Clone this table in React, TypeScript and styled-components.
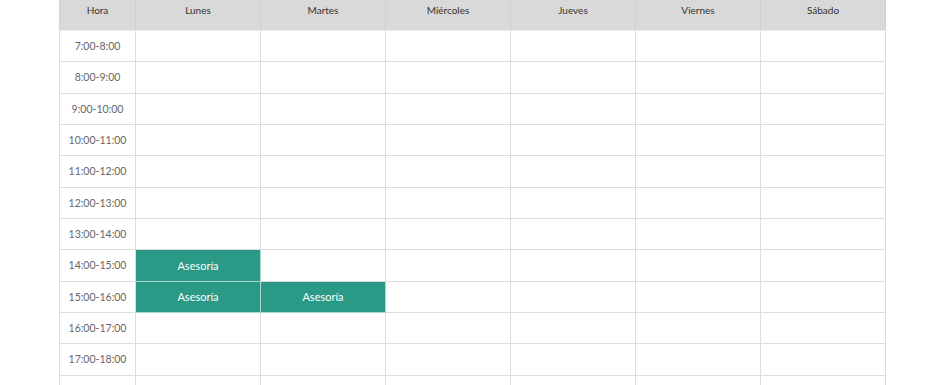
import React from 'react'
import styled, { createGlobalStyle } from 'styled-components'

const GlobalStyle = createGlobalStyle`
	html, body {
		margin: 0;
		padding: 0;
		background: #ffffff;
		overflow: hidden;
	}
	body {
		font-family: Lato, "Open Sans", "Liberation Sans", sans-serif;
	}
`

const days = ['Lunes', 'Martes', 'Miércoles', 'Jueves', 'Viernes', 'Sábado']

const hours = [
	'7:00-8:00',
	'8:00-9:00',
	'9:00-10:00',
	'10:00-11:00',
	'11:00-12:00',
	'12:00-13:00',
	'13:00-14:00',
	'14:00-15:00',
	'15:00-16:00',
	'16:00-17:00',
	'17:00-18:00',
	'',
]

// hour index -> day index -> label
const booked: Record<number, Record<number, string>> = {
	7: { 0: 'Asesoría' },
	8: { 0: 'Asesoría', 1: 'Asesoría' },
}

const App: React.FC = () => {
	return (
		<>
			<GlobalStyle />
			<StyledPage>
				<StyledGrid>
					<StyledHeadCell first>Hora</StyledHeadCell>
					{days.map((d) => (
						<StyledHeadCell key={d}>{d}</StyledHeadCell>
					))}
					{hours.map((h, i) => (
						<React.Fragment key={i}>
							<StyledHourCell>{h}</StyledHourCell>
							{days.map((d, j) => {
								const label = booked[i] && booked[i][j]
								return (
									<StyledCell key={d} busy={!!label}>
										{label}
									</StyledCell>
								)
							})}
						</React.Fragment>
					))}
				</StyledGrid>
			</StyledPage>
		</>
	)
}

const StyledPage = styled.div`
	padding-left: 59px;
	width: 945px;
	height: 385px;
	box-sizing: border-box;
	overflow: hidden;
`

const StyledGrid = styled.div`
	display: grid;
	grid-template-columns: 77px repeat(6, 125px);
	grid-template-rows: 31px repeat(12, 31.33px);
	width: 827px;
`

const StyledHeadCell = styled.div<{ first?: boolean }>`
	display: flex;
	align-items: flex-start;
	justify-content: center;
	padding-top: 4px;
	box-sizing: border-box;
	background: #d9d9d9;
	color: #333333;
	font-size: 10px;
	line-height: 13px;
	border-right: 1px solid #cfcfcf;
	border-bottom: 1px solid #ececec;
	border-left: ${(props) => (props.first ? '1px solid #d2d2d2' : 'none')};
`

const StyledHourCell = styled.div`
	display: flex;
	align-items: center;
	justify-content: center;
	box-sizing: border-box;
	color: #666666;
	font-size: 10.5px;
	border-left: 1px solid #dcdcdc;
	border-right: 1px solid #dcdcdc;
	border-bottom: 1px solid #dcdcdc;
`

const StyledCell = styled.div<{ busy?: boolean }>`
	display: flex;
	align-items: center;
	justify-content: center;
	box-sizing: border-box;
	font-size: 11px;
	color: #ffffff;
	background: ${(props) => (props.busy ? '#2a9985' : '#ffffff')};
	border-right: 1px solid ${(props) => (props.busy ? '#a9d8cf' : '#dcdcdc')};
	border-bottom: 1px solid ${(props) => (props.busy ? '#a9d8cf' : '#dcdcdc')};
`

export default App
